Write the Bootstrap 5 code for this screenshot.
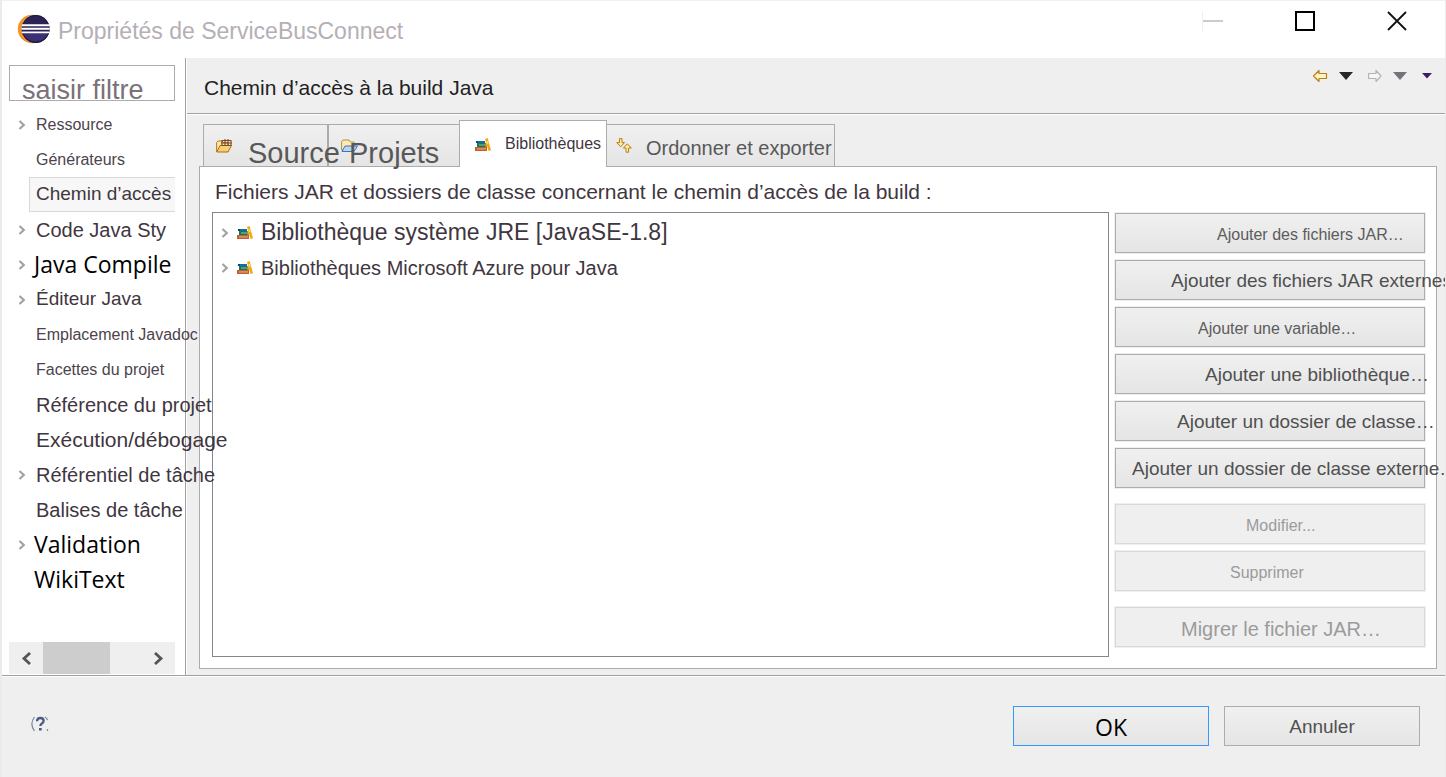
<!DOCTYPE html>
<html lang="fr">
<head>
<meta charset="utf-8">
<meta name="viewport" content="width=device-width, initial-scale=1">
<title>Propriétés de ServiceBusConnect</title>
<link href="https://cdn.jsdelivr.net/npm/bootstrap@5.3.0/dist/css/bootstrap.min.css" rel="stylesheet">
<style>
  :root { --face:#efefef; --line:#a0a0a0; --edge:#acacac; --ink:#3f363f; }
  body { background:var(--face); color:var(--ink); font-family:"Liberation Sans",Arial,sans-serif; font-size:20px; line-height:1.2; }
  button { font-family:inherit; color:inherit; }
  svg { flex:none; }
  .t16 { font-size:16px; } .t19 { font-size:19px; } .t20 { font-size:20px; }
  .t21 { font-size:21px; } .t23 { font-size:23px; } .t29 { font-size:29px; }
  .segoe { font-family:"Open Sans","Noto Sans",sans-serif; font-size:23px; color:#000; }
  .dialog { border-left:2px solid #ebebeb; border-right:1px solid #ebebeb; }
  .titlebar { background:#fff; height:58px; border-top:1px solid #f0f0f0; padding:0 37px 0 14px; color:#b5afb6; }
  .titlebar > svg { margin-bottom:2px; }
  .caption { gap:70px; margin-bottom:18px; }
  .bare { border:0; background:none; padding:0; display:flex; align-items:center; }

  .side { width:184px; background:#fff; border-right:1px solid var(--line); padding:7px 10px 1px 7px; }
  .filter { height:36px; width:100%; border:1px solid var(--edge); border-radius:0; padding:14px 12px 0; font-size:27px; line-height:32px; color:#7b717a; }
  .tree { margin:6px 0 0; }
  .tree li { height:35px; display:flex; align-items:center; }
  .tree a { color:inherit; text-decoration:none; white-space:nowrap; position:relative; z-index:2; padding-left:7px; }
  .tree .t16 a { color:#4c444c; }
  .tree .segoe a { color:#000; padding-left:5px; }
  .twist { width:20px; flex:none; display:flex; padding-left:9px; }
  .chosen > .pick { height:35px; flex:1; display:flex; align-items:center; background:#f7f7f7; border:1px solid #d9d9d9; border-right:0; }
  .chosen > .pick a { padding-left:6px; }
  .hbar { height:32px; background:var(--face); }
  .hbar .bare { width:34px; justify-content:center; }
  .thumb { width:67px; background:#cdcdcd; }

  .pane { border-left:1px solid #fff; min-width:0; }
  .heading { height:56px; border-bottom:1px solid var(--line); box-shadow:0 1px #fff; padding:5px 13px 0 17px; color:#222; }
  .tools { gap:11px; padding-bottom:24px; }
  .sheet { padding:6px 8px 6px 12px; }
  .nav-tabs { border:0; padding-left:4px; align-items:flex-end; flex-wrap:nowrap; height:46px; }
  .nav-tabs .nav-link { height:42px; margin:0; border:1px solid var(--edge); border-bottom:0; border-radius:0; color:#585858; background:linear-gradient(#f0f0f0,#e5e5e5); padding:0 0 0 12px; display:flex; align-items:center; white-space:nowrap; }
  .nav-tabs .nav-link.active { height:47px; margin:0 -1px -1px; border-color:var(--edge); background:#fff; color:var(--ink); position:relative; z-index:1; }
  .tab-source { width:125px; } .tab-projects { width:132px; } .tab-libs { width:148px; } .tab-order { width:229px; }
  .nav-tabs .t29 { position:relative; z-index:2; padding-top:15px; }
  .nav-tabs .tab-source .t29 { padding-left:16px; }
  .nav-tabs .tab-projects .t29 { margin-left:-9px; }
  .nav-tabs .tab-libs { padding-left:15px; } .nav-tabs .tab-libs span { padding-left:14px; }
  .nav-tabs .tab-order { padding-left:9px; } .tab-order span { padding:4px 0 0 14px; }
  .page { background:#fff; border:1px solid var(--edge); padding:12px 11px 11px 12px; }
  .page .lead-in { padding:0 0 8px 3px; line-height:25px; }
  .libs { border:1px solid #828790; padding:2px 8px; margin:0 6px 0 0; }
  .libs li { height:35px; display:flex; align-items:center; white-space:nowrap; }
  .libs svg + svg { margin:0 8px; }
  .acts { width:310px; gap:7px; padding-top:1px; }
  .push { height:40px; width:100%; border:1px solid var(--edge); border-radius:0; box-shadow:0 0 0 1px #efefef; background:linear-gradient(#f0f0f0,#e5e5e5); color:#505050; padding:3px 0 0; display:flex; align-items:center; white-space:nowrap; }
  .push:disabled { background:#efefef; border-color:#d9d9d9; color:#9b9b9b; }
  .push span { position:relative; z-index:2; }
  .push.t16:enabled { color:#5c5c5c; }
  .apart { margin-top:9px; }
  .in-a { padding-left:16px; } .in-b { padding-left:55px; } .in-c { padding-left:61px; } .in-d { padding-left:65px; }
  .in-e { padding-left:82px; } .in-f { padding-left:89px; } .in-g { padding-left:101px; } .in-h { padding-left:114px; } .in-i { padding-left:130px; }

  .foot { border-top:1px solid var(--line); box-shadow:inset 0 1px #fff; padding:30px 25px 31px 28px; }
  .foot .push { width:196px; box-shadow:none; justify-content:center; }
  .foot .push.ok { border-color:#39f; color:#000; }
  .foot-acts { gap:15px; }
  .foot > .bare { padding-bottom:4px; }
</style>
</head>
<body>
<svg class="d-none" aria-hidden="true">
  <symbol id="chev" viewBox="0 0 8 10"><path d="M1.5 1 5.800 5 1.500 9" fill="none" stroke="#a2a2a2" stroke-width="2.200"/></symbol>
  <symbol id="books" viewBox="0 0 16 13">
    <path d="M1 3h9v2H1z" fill="#1769ad"/><path d="M1 3h2v2H1z" fill="#0d4678"/>
    <path d="M2 5h8v4H2z" fill="#14775a"/><path d="M4 6.400h6v1.200H4z" fill="#6fbf9a"/>
    <path d="M0 9h12v4H0z" fill="#c0602f"/><path d="M2 10.300h9v1.200H2z" fill="#e8a27a"/>
    <path d="M10 1 12.600 0 16 12.200 13.600 13z" fill="#f1a70c"/><path d="M11.200 3.200l1.500-.5.900 3-1.500.5z" fill="#ffdc72"/>
    <path d="M10 5h1.200L12 9h-2z" fill="#c98208"/>
  </symbol>
</svg>
<div class="dialog d-flex flex-column min-vh-100 overflow-hidden">
  <header class="titlebar d-flex align-items-center">
    <svg width="34" height="30" viewBox="0 0 34 30" aria-hidden="true">
      <circle cx="16" cy="15" r="14.200" fill="#f7941e"/>
      <circle cx="19.600" cy="15" r="14.200" fill="#fff"/>
      <circle cx="19.600" cy="15" r="14" fill="#2c2255"/>
      <path d="M6.500 18.500h26a14 14 0 0 1-26 0z" fill="#3b2f78"/>
      <circle cx="19.600" cy="15" r="13.600" fill="none" stroke="#1c1c2c"/>
      <path d="M6 11.200h27.400M5.400 14.800h28.400M6 18.400h27.400" stroke="#fff" stroke-width="1.900"/>
    </svg>
    <span class="t23 ms-2 text-nowrap pt-1">Propriétés de ServiceBusConnect</span>
    <div class="caption d-flex ms-auto">
      <button class="bare" type="button" aria-label="Réduire"><svg width="22" height="22" viewBox="0 0 22 22"><path d="M.5 1v20" stroke="#eee"/><path d="M1 11h20" stroke="#ccc" stroke-width="2"/></svg></button>
      <button class="bare" type="button" aria-label="Agrandir"><svg width="22" height="22" viewBox="0 0 22 22"><path d="M2 2h18v18H2z" fill="none" stroke="#000" stroke-width="2"/></svg></button>
      <button class="bare" type="button" aria-label="Fermer"><svg width="22" height="22" viewBox="0 0 22 22"><path d="M2 2 20 20M20 2 2 20" stroke="#111" stroke-width="1.800"/></svg></button>
    </div>
  </header>

  <div class="d-flex flex-grow-1">
    <nav class="side d-flex flex-column flex-shrink-0" aria-label="Catégories">
      <input class="filter" type="text" value="saisir filtre" aria-label="Filtre">
      <ul class="tree list-unstyled t20">
        <li class="t16"><span class="twist"><svg width="8" height="10"><use href="#chev"/></svg></span><a href="#">Ressource</a></li>
        <li class="t16"><span class="twist"></span><a href="#">Générateurs</a></li>
        <li class="chosen t19"><span class="twist"></span><span class="pick"><a href="#">Chemin d’accès</a></span></li>
        <li><span class="twist"><svg width="8" height="10"><use href="#chev"/></svg></span><a href="#">Code Java Sty</a></li>
        <li class="segoe"><span class="twist"><svg width="8" height="10"><use href="#chev"/></svg></span><a href="#">Java Compile</a></li>
        <li class="t19"><span class="twist"><svg width="8" height="10"><use href="#chev"/></svg></span><a href="#">Éditeur Java</a></li>
        <li class="t16"><span class="twist"></span><a href="#">Emplacement Javadoc</a></li>
        <li class="t16"><span class="twist"></span><a href="#">Facettes du projet</a></li>
        <li><span class="twist"></span><a href="#">Référence du projet</a></li>
        <li class="t21"><span class="twist"></span><a href="#">Exécution/débogage</a></li>
        <li><span class="twist"><svg width="8" height="10"><use href="#chev"/></svg></span><a href="#">Référentiel de tâche</a></li>
        <li><span class="twist"></span><a href="#">Balises de tâche</a></li>
        <li class="segoe"><span class="twist"><svg width="8" height="10"><use href="#chev"/></svg></span><a href="#">Validation</a></li>
        <li class="segoe"><span class="twist"></span><a href="#">WikiText</a></li>
      </ul>
      <div class="hbar d-flex mt-auto">
        <button class="bare" type="button" aria-label="Défiler à gauche"><svg width="11" height="13" viewBox="0 0 11 13"><path d="M9 1 3 6.500 9 12" fill="none" stroke="#555" stroke-width="2.800"/></svg></button>
        <div class="thumb"></div>
        <button class="bare ms-auto" type="button" aria-label="Défiler à droite"><svg width="11" height="13" viewBox="0 0 11 13"><path d="M2 1 8 6.500 2 12" fill="none" stroke="#555" stroke-width="2.800"/></svg></button>
      </div>
    </nav>

    <main class="pane d-flex flex-column flex-grow-1">
      <div class="heading d-flex align-items-center justify-content-between">
        <h1 class="t21 m-0 fw-normal">Chemin d’accès à la build Java</h1>
        <div class="tools d-flex align-items-center">
          <button class="bare" type="button" aria-label="Précédent"><svg width="16" height="14" viewBox="0 0 16 14"><path d="M1.500 7 7 1.500v3h7.500v5H7v3z" fill="#fff3c0" stroke="#b9801c" stroke-width="1.200" stroke-linejoin="round"/></svg></button>
          <button class="bare" type="button" aria-label="Historique précédent"><svg width="14" height="8" viewBox="0 0 14 8"><path d="M0 0h14L7 8z" fill="#262626"/></svg></button>
          <button class="bare ms-1" type="button" aria-label="Suivant"><svg width="14" height="14" viewBox="0 0 14 14"><path d="M13 7 8 1.500v3H.600v5H8v3z" fill="#f6f6f6" stroke="#b4b4b4" stroke-width="1.200" stroke-linejoin="round"/></svg></button>
          <button class="bare" type="button" aria-label="Historique suivant"><svg width="14" height="8" viewBox="0 0 14 8"><path d="M0 0h14L7 8z" fill="#74727a"/></svg></button>
          <button class="bare ms-1" type="button" aria-label="Menu"><svg width="10" height="6" viewBox="0 0 10 6"><path d="M0 0h10L5 5.500z" fill="#3a2060"/></svg></button>
        </div>
      </div>

      <div class="sheet d-flex flex-column flex-grow-1">
        <div class="nav nav-tabs" role="tablist">
          <button class="nav-link tab-source" type="button" role="tab">
            <svg width="16" height="14" viewBox="0 0 16 14" aria-hidden="true"><path d="M.6 12.500V3.500L2 2h4l1 1.500h5v9z" fill="#fbe7a6" stroke="#b8791f"/><path d="M.8 13 4 6.500h11.500L12 13z" fill="#f8cf73" stroke="#b06a18"/><path d="M6 1.500h9v5H6zM9 0v6.500M12 0v6.500M5 4h11" fill="none" stroke="#7b4a22" stroke-width="1.100"/></svg>
            <span class="t29">Source</span></button>
          <button class="nav-link tab-projects" type="button" role="tab">
            <svg width="17" height="14" viewBox="0 0 17 14" aria-hidden="true"><path d="M.6 11V2.500L2 1h6l1.500 2H13v8z" fill="#fdebb0" stroke="#a9924f"/><path d="M1 12.500 4 7h12.500L13 12.500z" fill="#b5d4f7" stroke="#4573b8"/></svg>
            <span class="t29">Projets</span></button>
          <button class="nav-link active tab-libs" type="button" role="tab" aria-selected="true">
            <svg width="16" height="13" aria-hidden="true"><use href="#books"/></svg>
            <span class="t16">Bibliothèques</span></button>
          <button class="nav-link tab-order" type="button" role="tab">
            <svg width="16" height="15" viewBox="0 0 16 15" aria-hidden="true"><path d="M3.500.6h2.500v4H8.500L4.700 8.800.8 4.600h2.700z" fill="#ffeaa0" stroke="#b87d1a"/><path d="M10 14.200h2.600V10h2.700l-4-4.200L7.400 10H10z" fill="#ffeaa0" stroke="#b87d1a"/></svg>
            <span class="t20">Ordonner et exporter</span></button>
        </div>
        <section class="page d-flex flex-column flex-grow-1">
          <div class="lead-in t21 text-nowrap">Fichiers JAR et dossiers de classe concernant le chemin d’accès de la build :</div>
          <div class="d-flex flex-grow-1">
            <ul class="libs list-unstyled flex-grow-1">
              <li class="t23"><svg width="8" height="10"><use href="#chev"/></svg><svg width="16" height="13"><use href="#books"/></svg>Bibliothèque système JRE [JavaSE-1.8]</li>
              <li class="t20"><svg width="8" height="10"><use href="#chev"/></svg><svg width="16" height="13"><use href="#books"/></svg>Bibliothèques Microsoft Azure pour Java</li>
            </ul>
            <div class="acts d-flex flex-column flex-shrink-0">
              <button class="push t16 in-g" type="button"><span>Ajouter des fichiers JAR…</span></button>
              <button class="push t19 in-b" type="button"><span>Ajouter des fichiers JAR externes…</span></button>
              <button class="push t16 in-e" type="button"><span>Ajouter une variable…</span></button>
              <button class="push t19 in-f" type="button"><span>Ajouter une bibliothèque…</span></button>
              <button class="push t19 in-c" type="button"><span>Ajouter un dossier de classe…</span></button>
              <button class="push t19 in-a" type="button"><span>Ajouter un dossier de classe externe…</span></button>
              <button class="push t16 in-i apart" type="button" disabled><span>Modifier...</span></button>
              <button class="push t16 in-h" type="button" disabled><span>Supprimer</span></button>
              <button class="push t20 in-d apart" type="button" disabled><span>Migrer le fichier JAR…</span></button>
            </div>
          </div>
        </section>
      </div>
    </main>
  </div>

  <footer class="foot d-flex align-items-center justify-content-between">
    <button class="bare" type="button" aria-label="Aide"><svg width="20" height="16" viewBox="0 0 20 16"><path d="M4.500 1Q-.8 8 4.500 15M15 1q1.800 1 2.500 3M17.500 13v2" fill="none" stroke="#76869f" stroke-width="1.200"/><path d="M7 5.200Q7.200 2 10.400 2q3.200 0 3.200 2.800 0 1.700-1.700 2.700-1.500.9-1.500 2.500" fill="none" stroke="#4a5c80" stroke-width="2.300"/><path d="M9 12h2.700v2.500H9z" fill="#4a5c80"/></svg></button>
    <div class="foot-acts d-flex">
      <button class="push ok segoe" type="button">OK</button>
      <button class="push t19" type="button">Annuler</button>
    </div>
  </footer>
</div>
<script src="https://cdn.jsdelivr.net/npm/bootstrap@5.3.0/dist/js/bootstrap.bundle.min.js"></script>
</body>
</html>
